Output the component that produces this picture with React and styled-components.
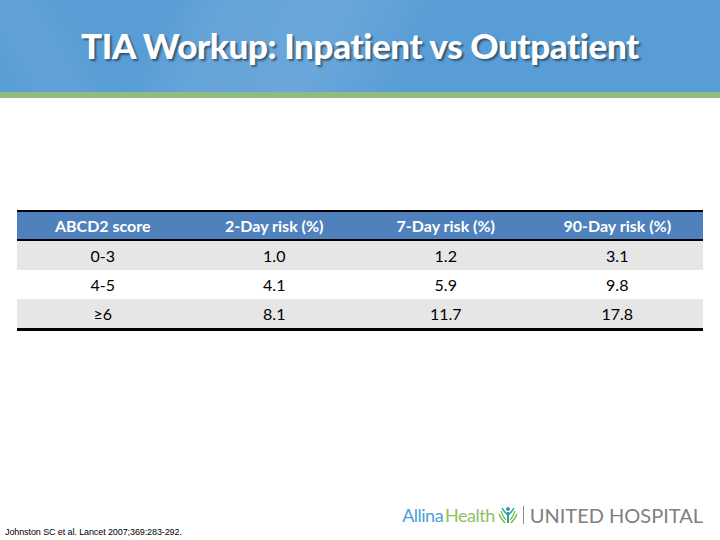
import React from "react";
import styled, { createGlobalStyle } from "styled-components";

const Global = createGlobalStyle`
  html, body { margin: 0; padding: 0; background: #ffffff; }
  body { width: 720px; height: 540px; overflow: hidden; font-family: "Open Sans", "Liberation Sans", sans-serif; }
`;

const Slide = styled.div`
  width: 720px;
  height: 540px;
  display: flex;
  flex-direction: column;
  background: #ffffff;
`;

const Header = styled.header`
  height: 92px;
  display: flex;
  align-items: center;
  justify-content: center;
  background:
    linear-gradient(115deg, rgba(255,255,255,0) 0%, rgba(255,255,255,0) 22%, rgba(255,255,255,0.08) 30%, rgba(255,255,255,0.1) 45%, rgba(255,255,255,0) 58%, rgba(255,255,255,0) 100%),
    linear-gradient(60deg, rgba(255,255,255,0) 0%, rgba(255,255,255,0.05) 8%, rgba(255,255,255,0) 16%),
    #599dd6;
`;

const Title = styled.h1`
  margin: 0 0 2px 0;
  color: #ffffff;
  font-family: "Lato", "Liberation Sans", sans-serif;
  font-weight: 900;
  font-size: 35px;
  letter-spacing: -0.4px;
  text-shadow: 2px 2px 2px rgba(0, 0, 0, 0.45);
`;

const Stripe = styled.div`
  height: 6px;
  background: #8fbd80;
`;

const Body = styled.main`
  flex: 1;
  display: flex;
  flex-direction: column;
  padding: 112px 17px 0 17px;
`;

const Table = styled.table`
  width: 686px;
  border-collapse: collapse;
  border-top: 2px solid #000000;
  border-bottom: 3px solid #000000;
  font-family: "Lato", "Liberation Sans", sans-serif;
  font-size: 16px;
`;

const HeadCell = styled.th`
  height: 27px;
  padding: 0;
  background: #4f81bd;
  color: #ffffff;
  font-weight: 700;
  text-align: center;
  border-bottom: 2px solid #000000;
  width: 25%;
`;

const Row = styled.tr`
  background: ${(p) => (p.$shaded ? "#e6e6e6" : "#ffffff")};
`;

const Cell = styled.td`
  height: 29px;
  padding: 0;
  text-align: center;
  color: #000000;
`;

const Footer = styled.footer`
  height: 40px;
  display: flex;
  align-items: flex-end;
  justify-content: space-between;
  padding: 0 17px 0 5px;
`;

const Citation = styled.div`
  font-family: "Liberation Sans", sans-serif;
  font-size: 9px;
  letter-spacing: -0.1px;
  color: #000000;
  padding-bottom: 3px;
`;

const Logo = styled.div`
  display: flex;
  align-items: center;
  gap: 3px;
  padding-bottom: 15px;
  font-family: "Lato", "Liberation Sans", sans-serif;
`;

const Word = styled.span`
  color: ${(p) => p.$color};
  font-size: ${(p) => p.$size}px;
  font-weight: 400;
  letter-spacing: ${(p) => p.$spacing || 0}px;
  line-height: 1;
`;

const Brand = styled.span`
  display: flex;
  align-items: baseline;
  gap: 2px;
`;

const Divider = styled.span`
  width: 1px;
  height: 18px;
  background: #8a8a8a;
  margin: 0 3px 0 2px;
`;

const rows = [
  ["0-3", "1.0", "1.2", "3.1"],
  ["4-5", "4.1", "5.9", "9.8"],
  ["\u22656", "8.1", "11.7", "17.8"],
];

function TreeMark() {
  return (
    <svg width="20" height="18" viewBox="0 0 20 18">
      <circle cx="10" cy="3" r="2" fill="#2e9fa8" />
      <path d="M10 6 L10 17" stroke="#2e9fa8" strokeWidth="2" />
      <path d="M10 9 Q6 6 4 2" stroke="#2e9fa8" strokeWidth="1.6" fill="none" />
      <path d="M10 9 Q14 6 16 2" stroke="#2e9fa8" strokeWidth="1.6" fill="none" />
      <path d="M7 17 Q3 13 1 8" stroke="#7cbf4a" strokeWidth="1.6" fill="none" />
      <path d="M13 17 Q17 13 19 8" stroke="#7cbf4a" strokeWidth="1.6" fill="none" />
      <path d="M8 14 Q5 11 3 5" stroke="#7cbf4a" strokeWidth="1.3" fill="none" />
      <path d="M12 14 Q15 11 17 5" stroke="#7cbf4a" strokeWidth="1.3" fill="none" />
    </svg>
  );
}

export default function App() {
  return (
    <Slide>
      <Global />
      <Header>
        <Title>TIA Workup: Inpatient vs Outpatient</Title>
      </Header>
      <Stripe />
      <Body>
        <Table>
          <thead>
            <tr>
              <HeadCell>ABCD2 score</HeadCell>
              <HeadCell>2-Day risk (%)</HeadCell>
              <HeadCell>7-Day risk (%)</HeadCell>
              <HeadCell>90-Day risk (%)</HeadCell>
            </tr>
          </thead>
          <tbody>
            {rows.map((r, i) => (
              <Row key={i} $shaded={i % 2 === 0}>
                {r.map((c, j) => (
                  <Cell key={j}>{c}</Cell>
                ))}
              </Row>
            ))}
          </tbody>
        </Table>
      </Body>
      <Footer>
        <Citation>Johnston SC et al. Lancet 2007;369:283-292.</Citation>
        <Logo>
          <Brand>
            <Word $color="#4a9fd8" $size={18} $spacing={-0.5}>Allina</Word>
            <Word $color="#8cc260" $size={18} $spacing={-0.5}>Health</Word>
          </Brand>
          <TreeMark />
          <Divider />
          <Word $color="#808080" $size={20} $spacing={0}>UNITED HOSPITAL</Word>
        </Logo>
      </Footer>
    </Slide>
  );
}
